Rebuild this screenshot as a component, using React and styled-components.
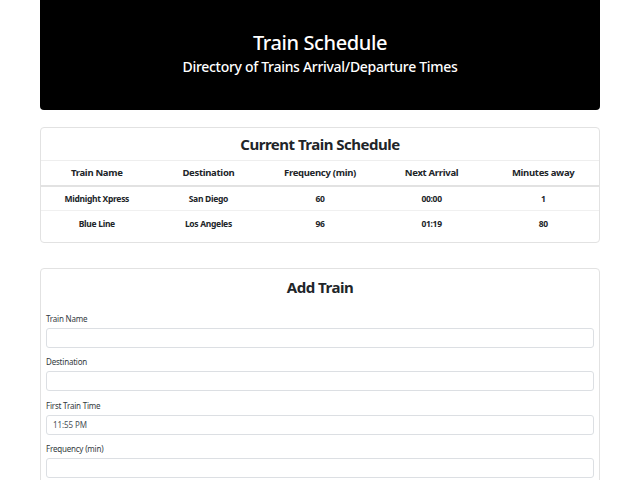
import React from "react";
import styled, { createGlobalStyle } from "styled-components";

const GlobalStyle = createGlobalStyle`
  * { box-sizing: border-box; }
  body {
    margin: 0;
    background: #ffffff;
    color: #212529;
    font-family: "Noto Sans", "Open Sans", sans-serif;
  }
`;

const Page = styled.div`
  width: 560px;
  margin: 0 auto;
  display: flex;
  flex-direction: column;
`;

const Jumbotron = styled.header`
  background: #000000;
  color: #ffffff;
  height: 110px;
  border-radius: 0 0 4px 4px;
  display: flex;
  flex-direction: column;
  align-items: center;
  justify-content: center;
  padding-bottom: 5px;

  h1 {
    margin: 0 0 2px;
    font-size: 20px;
    font-weight: 500;
    line-height: 25px;
    letter-spacing: -0.4px;
  }
  h2 {
    margin: 0;
    font-size: 14px;
    font-weight: 500;
    line-height: 19px;
    letter-spacing: -0.3px;
  }
`;

const Card = styled.section`
  border: 1px solid #e2e2e2;
  border-radius: 4px;
  margin-top: ${(p) => p.$top}px;
  padding-bottom: ${(p) => p.$bottom || 0}px;
`;

const CardTitle = styled.h3`
  margin: 0;
  text-align: center;
  font-size: 15px;
  font-weight: 700;
  line-height: 20px;
  letter-spacing: -0.5px;
  padding: ${(p) => p.$pad};
`;

const Table = styled.table`
  width: 100%;
  border-collapse: collapse;
  table-layout: fixed;
  text-align: center;

  th {
    font-size: 9.5px;
    font-weight: 700;
    letter-spacing: -0.3px;
    height: 25px;
    border-top: 1px solid #eeeeee;
    border-bottom: 2px solid #e2e2e2;
    padding: 0;
  }
  td {
    font-size: 8.5px;
    font-weight: 700;
    letter-spacing: -0.3px;
    height: 25px;
    padding: 0;
  }
  tbody tr + tr td {
    border-top: 1px solid #f0f0f0;
  }
`;

const Form = styled.form`
  display: flex;
  flex-direction: column;
  padding: 0 5px;
`;

const Field = styled.div`
  display: flex;
  flex-direction: column;
  margin-bottom: 8.5px;
`;

const Label = styled.label`
  font-size: 8px;
  line-height: 12px;
  letter-spacing: -0.2px;
  color: #333a40;
  margin-bottom: 3px;
`;

const Input = styled.input`
  height: 20px;
  border: 1px solid #dcdfe3;
  border-radius: 3px;
  padding: 0 6px;
  font-family: inherit;
  font-size: 8px;
  letter-spacing: -0.1px;
  color: #495057;
  background: #ffffff;
`;

const rows = [
  ["Midnight Xpress", "San Diego", "60", "00:00", "1"],
  ["Blue Line", "Los Angeles", "96", "01:19", "80"],
];

const fields = [
  { label: "Train Name", value: "" },
  { label: "Destination", value: "" },
  { label: "First Train Time", value: "11:55 PM" },
  { label: "Frequency (min)", value: "" },
];

export default function App() {
  return (
    <>
      <GlobalStyle />
      <Page>
        <Jumbotron>
          <h1>Train Schedule</h1>
          <h2>Directory of Trains Arrival/Departure Times</h2>
        </Jumbotron>

        <Card $top={17} $bottom={6}>
          <CardTitle $pad="6px 0 6px">Current Train Schedule</CardTitle>
          <Table>
            <thead>
              <tr>
                <th>Train Name</th>
                <th>Destination</th>
                <th>Frequency (min)</th>
                <th>Next Arrival</th>
                <th>Minutes away</th>
              </tr>
            </thead>
            <tbody>
              {rows.map((r) => (
                <tr key={r[0]}>
                  {r.map((c, i) => (
                    <td key={i}>{c}</td>
                  ))}
                </tr>
              ))}
            </tbody>
          </Table>
        </Card>

        <Card $top={25}>
          <CardTitle $pad="8px 0 16px">Add Train</CardTitle>
          <Form onSubmit={(e) => e.preventDefault()}>
            {fields.map((f) => (
              <Field key={f.label}>
                <Label>{f.label}</Label>
                <Input defaultValue={f.value} />
              </Field>
            ))}
          </Form>
        </Card>
      </Page>
    </>
  );
}
